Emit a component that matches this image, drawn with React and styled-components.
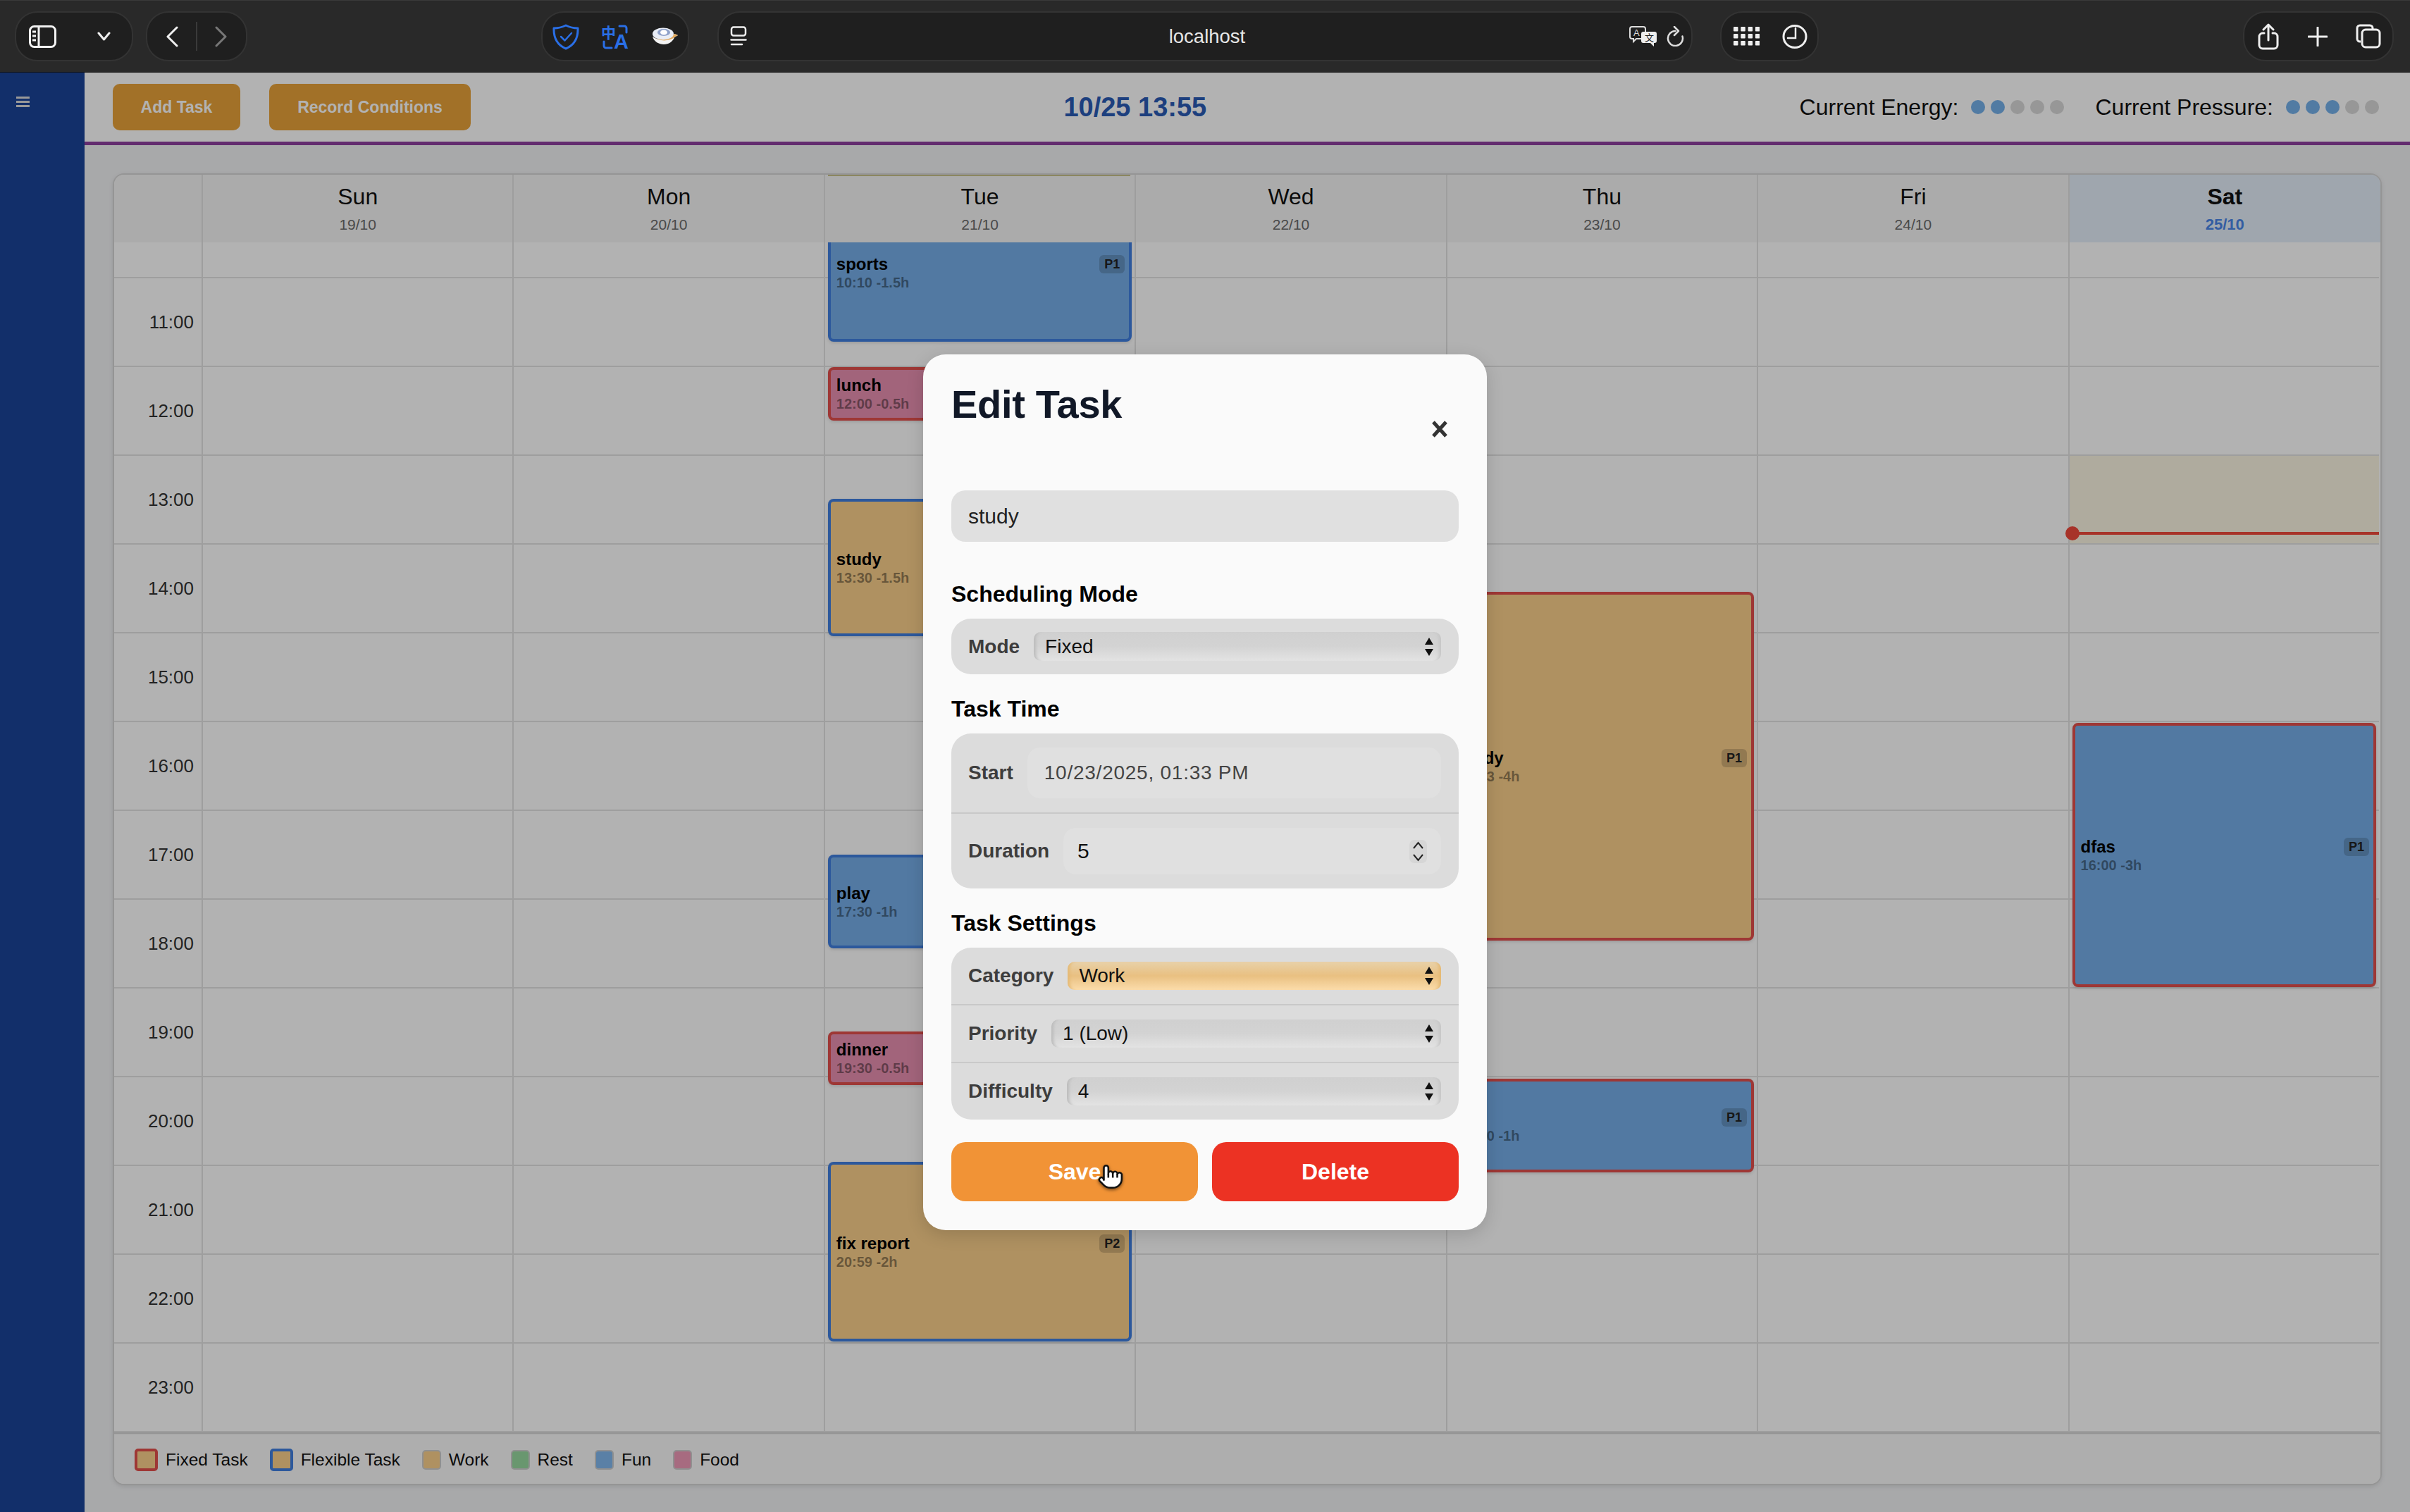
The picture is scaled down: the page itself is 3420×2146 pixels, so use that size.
import styled, { createGlobalStyle } from "styled-components"

const GlobalStyle = createGlobalStyle`
  html, body { margin: 0; padding: 0; height: 100%; }
  body { font-family: "Liberation Sans", Arial, sans-serif; background: #282828; }
  * { box-sizing: border-box; }
`

// ---------- browser toolbar ----------
const Window = styled.div`
  width: 100%;
  height: 100vh;
  display: flex;
  flex-direction: column;
  overflow: hidden;
`

const Toolbar = styled.div`
  height: 103px;
  flex: none;
  display: flex;
  align-items: center;
  padding-left: 21px;
  background: #292929;
  border-top: 1px solid #3a3a3a;
  border-bottom: 1px solid #111;
`

const Pill = styled.div`
  width: ${(p) => p.$w}px;
  height: 71px;
  margin-left: ${(p) => p.$gap || 0}px;
  flex: none;
  display: flex;
  align-items: center;
  justify-content: space-between;
  padding: ${(p) => p.$pad || "0 18px"};
  background: #1f1f1f;
  border: 2px solid #333;
  border-radius: 32px;
`

const UrlPill = styled(Pill)`
  display: grid;
  grid-template-columns: 1fr auto 1fr;
`

const UrlText = styled.span`
  color: #e6e6e6;
  font-size: 27.5px;
`

const UrlRight = styled.div`
  display: flex;
  justify-content: flex-end;
  align-items: center;
  gap: 13px;
`

const PillDivider = styled.span`
  width: 2px;
  height: 41px;
  background: #3a3a3a;
`

// ---------- app shell ----------
const AppBody = styled.div`
  flex: 1;
  min-height: 0;
  display: flex;
  position: relative;
`

const Sidebar = styled.aside`
  width: 120px;
  flex: none;
  background: #1b4499;
  padding: 34px 0 0 23px;
`

const Main = styled.main`
  flex: 1;
  min-width: 0;
  display: flex;
  flex-direction: column;
  background: #f1f2f4;
`

const Header = styled.header`
  height: 103px;
  flex: none;
  display: flex;
  align-items: center;
  justify-content: space-between;
  padding: 0 44px 0 40px;
  background: #fff;
  border-bottom: 5px solid #8e3f9f;
`

const HeaderButtons = styled.div`
  display: flex;
  gap: 41px;
`

const AddButton = styled.button`
  width: ${(p) => p.$w}px;
  height: 66px;
  padding: 0;
  border: none;
  border-radius: 10px;
  background: #e8a23a;
  color: #fff;
  font-family: inherit;
  font-size: 23px;
  font-weight: 700;
`

const HeaderTitle = styled.div`
  color: #2a5bb5;
  font-size: 38px;
  font-weight: 700;
`

const Meters = styled.div`
  display: flex;
  align-items: center;
  gap: 44px;
`

const Meter = styled.div`
  display: flex;
  align-items: center;
  gap: 18px;
  font-size: 32px;
  color: #111;
`

const Dots = styled.div`
  display: flex;
  gap: 8px;
`

const Dot = styled.span`
  width: 20px;
  height: 20px;
  border-radius: 50%;
  background: ${(p) => (p.$on ? "#75b0ea" : "#d8d8d8")};
`

// ---------- calendar ----------
const Card = styled.section`
  flex: 1;
  min-height: 0;
  margin: 40px 40px 38px;
  display: flex;
  flex-direction: column;
  background: #fff;
  border: 2px solid #d6d6d6;
  border-radius: 16px;
  box-shadow: 0 2px 6px rgba(0, 0, 0, 0.1);
  overflow: hidden;
`

const GridRow = styled.div`
  flex: none;
  display: grid;
  grid-template-columns: 126px repeat(7, 1fr);
  overflow: hidden;
`

const HeadCell = styled.div`
  height: 96px;
  padding-top: 11px;
  display: flex;
  flex-direction: column;
  align-items: center;
  background: ${(p) => (p.$today ? "#e4eefa" : "#f5f5f5")};
  border-right: ${(p) => (p.$last ? "0" : "2px solid #e2e2e2")};
  position: relative;
`

const DayName = styled.div`
  font-size: 32px;
  line-height: 40px;
  font-weight: ${(p) => (p.$today ? 700 : 400)};
  color: #111;
`

const DayDate = styled.div`
  margin-top: 8px;
  font-size: ${(p) => (p.$today ? 22 : 21)}px;
  line-height: 24px;
  font-weight: ${(p) => (p.$today ? 700 : 400)};
  color: ${(p) => (p.$today ? "#4a86e8" : "#6b6b6b")};
`

const PeekLine = styled.span`
  position: absolute;
  top: 0;
  left: 4px;
  right: 6px;
  height: 2px;
  background: #c7c08a;
`

const TimeCol = styled.div`
  border-right: 2px solid #e2e2e2;
`

const TimeCell = styled.div`
  height: ${(p) => p.$h}px;
  padding-right: 11px;
  display: flex;
  align-items: center;
  justify-content: flex-end;
  font-size: 26px;
  color: #333;
  border-bottom: 2px solid #e2e2e2;
`

const DayCol = styled.div`
  position: relative;
  border-right: 2px solid ${(p) => (p.$last ? "transparent" : "#e2e2e2")};
`

const HourCell = styled.div`
  height: ${(p) => p.$h}px;
  background: ${(p) => (p.$now ? "#fbf5e2" : "transparent")};
  border-bottom: 2px solid #e2e2e2;
`

const Event = styled.div`
  position: absolute;
  top: ${(p) => p.$top}px;
  left: 4px;
  right: 4px;
  height: ${(p) => p.$h}px;
  padding: 0 6px 0 8px;
  display: flex;
  flex-direction: column;
  justify-content: center;
  background: ${(p) => p.$bg};
  border: 4px solid ${(p) => (p.$fixed ? "#e24f4c" : "#3f7fe0")};
  border-radius: 8px;
  box-shadow: 0 2px 4px rgba(0, 0, 0, 0.12);
`

const EventTop = styled.div`
  display: flex;
  align-items: center;
  justify-content: space-between;
`

const EventName = styled.span`
  font-size: 24px;
  line-height: 28px;
  font-weight: 700;
  color: #000;
`

const EventTime = styled.span`
  font-size: 20px;
  line-height: 24px;
  font-weight: 700;
  color: rgba(0, 0, 0, 0.42);
`

const Badge = styled.span`
  padding: 2px 7px;
  border-radius: 6px;
  background: rgba(0, 0, 0, 0.16);
  font-size: 18px;
  line-height: 22px;
  font-weight: 700;
  color: #222;
`

const NowLine = styled.div`
  position: absolute;
  top: 411px;
  left: 0;
  right: 0;
  height: 4px;
  background: #ef4a3c;
`

const NowDot = styled.span`
  position: absolute;
  left: -6px;
  top: -8px;
  width: 20px;
  height: 20px;
  border-radius: 50%;
  background: #ef4a3c;
`

const Legend = styled.div`
  flex: 1;
  display: flex;
  align-items: center;
  gap: 31px;
  padding: 2px 0 0 29px;
  border-top: 2px solid #d4d4d4;
  background: #fafafa;
  box-shadow: inset 0 1px 2px rgba(0, 0, 0, 0.05);
`

const LegendItem = styled.div`
  display: flex;
  align-items: center;
  gap: 11px;
  font-size: 24.5px;
  color: #111;
`

const Swatch = styled.span`
  width: ${(p) => (p.$border ? 33 : 27)}px;
  height: ${(p) => (p.$border ? 32 : 28)}px;
  background: ${(p) => p.$bg};
  border: ${(p) => (p.$border ? `4px solid ${p.$border}` : "2px solid #cfcfcf")};
  border-radius: 5px;
`

// ---------- modal ----------
const Backdrop = styled.div`
  position: absolute;
  inset: 0;
  display: flex;
  align-items: center;
  justify-content: center;
  background: rgba(0, 0, 0, 0.3);
`

const Modal = styled.div`
  width: 800px;
  height: 1243px;
  padding: 40px;
  background: #fafafa;
  border-radius: 32px;
  box-shadow: 0 6px 24px rgba(0, 0, 0, 0.15);
`

const ModalHead = styled.div`
  height: 113px;
  margin-bottom: 40px;
  display: flex;
  align-items: flex-start;
  justify-content: space-between;
`

const ModalTitle = styled.h2`
  margin: 1px 0 0;
  font-size: 56px;
  line-height: 60px;
  font-weight: 700;
  letter-spacing: -0.3px;
  color: #111827;
`

const CloseIcon = styled.svg`
  margin: 54px 15px 0 0;
`

const NameInput = styled.div`
  height: 73px;
  padding: 0 24px;
  display: flex;
  align-items: center;
  background: #e0e0e0;
  border-radius: 20px;
  font-size: 30px;
  color: #222;
`

const SectionTitle = styled.h3`
  margin: ${(p) => p.$top || 29}px 0 15px;
  font-size: 32px;
  line-height: 40px;
  font-weight: 700;
  color: #000;
`

const Group = styled.div`
  background: #dcdcdc;
  border-radius: 28px;
  overflow: hidden;
`

const Row = styled.div`
  display: flex;
  align-items: center;
  gap: 20px;
  padding: ${(p) => p.$pad || 20}px 25px ${(p) => p.$pad || 20}px 24px;
  border-bottom: ${(p) => (p.$line ? "2px solid #c9c9c9" : "0")};
`

const RowLabel = styled.span`
  font-size: 28px;
  font-weight: 700;
  color: #3d3d3d;
`

const SelectBox = styled.div`
  flex: 1;
  height: ${(p) => p.$h || 40}px;
  padding: 0 10px 0 16px;
  display: flex;
  align-items: center;
  justify-content: space-between;
  border-radius: 10px;
  font-size: 28px;
  color: #111;
  background: ${(p) =>
    p.$tint
      ? "linear-gradient(180deg, #e8d1a9 0%, #e9c081 50%, #fbdcaa 100%)"
      : "linear-gradient(180deg, #d0d0d0 0%, #d3d3d3 50%, #e3e3e3 100%)"};
  box-shadow: inset 7px 0 4px -4px ${(p) => (p.$tint ? "#e4b873" : "#bbb")},
    inset -7px 0 4px -4px ${(p) => (p.$tint ? "#e4b873" : "#c6c6c6")};
`

const FieldBox = styled.div`
  flex: 1;
  height: ${(p) => p.$h}px;
  padding: ${(p) => p.$pad};
  display: flex;
  align-items: center;
  justify-content: space-between;
  background: #e0e0e0;
  border-radius: 18px;
  font-size: ${(p) => p.$size || 28}px;
  letter-spacing: ${(p) => p.$track || 0}px;
  color: ${(p) => p.$color || "#111"};
`

const Spinner = styled.div`
  width: 25px;
  height: 33px;
  display: flex;
  align-items: center;
  justify-content: center;
  background: #d6d6d6;
  border-radius: 7px;
`

const Actions = styled.div`
  margin-top: 32px;
  display: grid;
  grid-template-columns: 1fr 1fr;
  gap: 20px;
`

const ActionButton = styled.button`
  height: 84px;
  border: none;
  border-radius: 20px;
  background: ${(p) => p.$bg};
  color: #fff;
  font-family: inherit;
  font-size: 32px;
  font-weight: 700;
  position: relative;
`

const Cursor = styled.svg`
  position: absolute;
  left: 207px;
  top: 29px;
  filter: drop-shadow(0 2px 2px rgba(0, 0, 0, 0.5));
`

// ---------- icons ----------
const SidebarIcon = () => (
  <svg width="39" height="32" viewBox="0 0 39 32" fill="none" stroke="#f2f2f2" strokeWidth="3">
    <rect x="1.5" y="1.5" width="36" height="29" rx="6" />
    <path d="M14 2v28" />
    <path d="M5 9h5M5 15h5M5 21h5" strokeWidth="3" />
  </svg>
)

const ChevronDown = () => (
  <svg width="19" height="13" viewBox="0 0 19 13" fill="none" stroke="#eee" strokeWidth="3" strokeLinecap="round" strokeLinejoin="round">
    <path d="M2 2l7.5 9L17 2" />
  </svg>
)

const ChevronSide = ({ dir, color }) => (
  <svg width="19" height="30" viewBox="0 0 19 30" fill="none" stroke={color} strokeWidth="3" strokeLinecap="round" strokeLinejoin="round">
    <path d={dir === "left" ? "M16 2L3 15l13 13" : "M3 2l13 13L3 28"} />
  </svg>
)

const ShieldIcon = () => (
  <svg width="38" height="38" viewBox="0 0 38 38" fill="none" stroke="#2a6fe6" strokeWidth="3" strokeLinecap="round" strokeLinejoin="round">
    <path d="M19 3c5 2.5 11 4 17 4c.5 14-5 24-17 29C7 31 1.500 21 2 7c6 0 12-1.500 17-4z" />
    <path d="M12 19l5.500 5.500L27 14" strokeWidth="2.500" />
  </svg>
)

const TranslateIcon = () => (
  <svg width="40" height="48" viewBox="0 0 40 48" fill="#2a6fe6" overflow="visible">
    <text x="-1" y="26" fontSize="21" fontWeight="700" fontFamily="Noto Sans CJK SC">中</text>
    <text x="17" y="41" fontSize="29" fontWeight="700" fontFamily="Liberation Sans">A</text>
    <path d="M25 9h7a3 3 0 0 1 3 3v6M3 31v6a3 3 0 0 0 3 3h8" fill="none" stroke="#2a6fe6" strokeWidth="3" strokeLinecap="round" />
  </svg>
)

const CupIcon = () => (
  <svg width="37" height="25" viewBox="0 0 37 25">
    <path d="M1 13c2 7 9 11 16 11s13-4 15-10l5-3-5-2C24 19 9 19 1 13z" fill="#f3f3f3" />
    <path d="M1 13c8 6 23 6 31-4l5 2-5 3c-8 6-22 6-31-1z" fill="#e3a95b" />
    <ellipse cx="16" cy="9" rx="15" ry="8.500" fill="#e9edf5" />
    <ellipse cx="17" cy="7" rx="9" ry="5" fill="#8fa1c9" />
    <ellipse cx="17" cy="7" rx="5" ry="3.500" fill="#fff" />
  </svg>
)

const ReaderIcon = () => (
  <svg width="24" height="29" viewBox="0 0 24 29" fill="none" stroke="#eee" strokeWidth="2.500" strokeLinecap="round">
    <rect x="2" y="1.500" width="20" height="12" rx="3" />
    <path d="M1.500 19.500h21M2 26h15" />
  </svg>
)

const BubblesIcon = () => (
  <svg width="40" height="30" viewBox="0 0 40 30">
    <path d="M4 1h16a3 3 0 0 1 3 3v11a3 3 0 0 1-3 3H10l-4 4v-4H4a3 3 0 0 1-3-3V4a3 3 0 0 1 3-3z" fill="none" stroke="#ddd" strokeWidth="2" />
    <text x="6" y="14" fontSize="13" fill="#ddd" fontFamily="Liberation Sans">A</text>
    <path d="M20 8h16a3 3 0 0 1 3 3v10a3 3 0 0 1-3 3h-1v5l-5-5H20a3 3 0 0 1-3-3V11a3 3 0 0 1 3-3z" fill="#eee" />
    <text x="22" y="21" fontSize="13" fill="#222" fontFamily="Noto Sans CJK SC">文</text>
  </svg>
)

const ReloadIcon = () => (
  <svg width="25" height="29" viewBox="0 0 25 29" fill="none" stroke="#ddd" strokeWidth="2.500" strokeLinecap="round" strokeLinejoin="round">
    <path d="M12.500 7A10.500 10.500 0 1 0 22.500 14.500" />
    <path d="M11 1l6 6l-6 6" />
  </svg>
)

const GridIcon = () => (
  <svg width="37" height="27" viewBox="0 0 37 27" fill="#eee">
    {[0, 1, 2].flatMap((r) =>
      [0, 1, 2, 3].map((c) => <rect key={`${r}-${c}`} x={c * 10.3} y={r * 10} width="6.500" height="6.500" rx="1" />)
    )}
  </svg>
)

const ClockIcon = () => (
  <svg width="36" height="34" viewBox="0 0 36 34" fill="none" stroke="#eee" strokeWidth="3" strokeLinecap="round">
    <ellipse cx="18" cy="17" rx="16" ry="15.500" />
    <path d="M19 5v14H8" strokeWidth="2.500" />
  </svg>
)

const ShareIcon = () => (
  <svg width="30" height="38" viewBox="0 0 30 38" fill="none" stroke="#eee" strokeWidth="3" strokeLinecap="round" strokeLinejoin="round">
    <path d="M9 14H7a5 5 0 0 0-5 5v12a5 5 0 0 0 5 5h16a5 5 0 0 0 5-5V19a5 5 0 0 0-5-5h-2" />
    <path d="M15 24V2M8 9l7-7l7 7" />
  </svg>
)

const PlusIcon = () => (
  <svg width="28" height="28" viewBox="0 0 28 28" stroke="#eee" strokeWidth="3" strokeLinecap="round">
    <path d="M14 1v26M1 14h26" />
  </svg>
)

const TabsIcon = () => (
  <svg width="36" height="35" viewBox="0 0 36 35" fill="none" stroke="#eee" strokeWidth="3">
    <path d="M7 25H6a4 4 0 0 1-4-4V6a4 4 0 0 1 4-4h14a4 4 0 0 1 4 4v1" />
    <rect x="9" y="8" width="25" height="25" rx="5" />
  </svg>
)

const MenuIcon = () => (
  <svg width="19" height="16" viewBox="0 0 19 16" fill="#dcdcdc">
    <rect y="0" width="19" height="3" />
    <rect y="6" width="19" height="3" />
    <rect y="12" width="19" height="3" />
  </svg>
)

const UpDownArrows = () => (
  <svg width="14" height="26" viewBox="0 0 14 26" fill="#111">
    <path d="M7 0l6 10H1zM7 26l-6-10h12z" />
  </svg>
)

const SpinArrows = () => (
  <svg width="17" height="29" viewBox="0 0 17 29" fill="none" stroke="#222" strokeWidth="2">
    <path d="M2 10l6.500-8L15 10M2 19l6.500 8L15 19" />
  </svg>
)

// ---------- data ----------
const DAYS = [
  ["Sun", "19/10"], ["Mon", "20/10"], ["Tue", "21/10"], ["Wed", "22/10"],
  ["Thu", "23/10"], ["Fri", "24/10"], ["Sat", "25/10"],
]
const HOURS = ["11:00", "12:00", "13:00", "14:00", "15:00", "16:00", "17:00", "18:00", "19:00", "20:00", "21:00", "22:00", "23:00"]

const BLUE = "#76aee8"
const TAN = "#fbd08c"
const PINK = "#e890b0"

const EVENTS = {
  2: [
    { name: "sports", time: "10:10 -1.5h", top: -55, h: 196, bg: BLUE, badge: "P1" },
    { name: "lunch", time: "12:00 -0.5h", top: 177, h: 76, bg: PINK, fixed: true },
    { name: "study", time: "13:30 -1.5h", top: 364, h: 195, bg: TAN },
    { name: "play", time: "17:30 -1h", top: 869, h: 133, bg: BLUE },
    { name: "dinner", time: "19:30 -0.5h", top: 1120, h: 76, bg: PINK, fixed: true },
    { name: "fix report", time: "20:59 -2h", top: 1305, h: 255, bg: TAN, badge: "P2" },
  ],
  4: [
    { name: "study", time: "14:33 -4h", top: 496, h: 495, bg: TAN, fixed: true, badge: "P1" },
    { name: "tv", time: "20:00 -1h", top: 1187, h: 133, bg: BLUE, fixed: true, badge: "P1" },
  ],
  6: [{ name: "dfas", time: "16:00 -3h", top: 682, h: 375, bg: BLUE, fixed: true, badge: "P1" }],
}

const LEGEND = [
  { label: "Fixed Task", bg: TAN, border: "#e24f4c" },
  { label: "Flexible Task", bg: TAN, border: "#3f7fe0" },
  { label: "Work", bg: TAN },
  { label: "Rest", bg: "#97d9a0" },
  { label: "Fun", bg: "#82b8ee" },
  { label: "Food", bg: "#f09ab8" },
]

const meter = (level) => [1, 2, 3, 4, 5].map((n) => <Dot key={n} $on={n <= level} />)

export default function App() {
  return (
    <Window>
      <GlobalStyle />
      <Toolbar>
        <Pill $w={168} $pad="0 30px 0 18px">
          <SidebarIcon />
          <ChevronDown />
        </Pill>
        <Pill $w={144} $gap={18} $pad="0 26px">
          <ChevronSide dir="left" color="#eee" />
          <PillDivider />
          <ChevronSide dir="right" color="#777" />
        </Pill>
        <Pill $w={210} $gap={417} $pad="0 14px">
          <ShieldIcon />
          <TranslateIcon />
          <CupIcon />
        </Pill>
        <UrlPill $w={1384} $gap={40} $pad="0 10px 0 16px">
          <ReaderIcon />
          <UrlText>localhost</UrlText>
          <UrlRight>
            <BubblesIcon />
            <ReloadIcon />
          </UrlRight>
        </UrlPill>
        <Pill $w={140} $gap={39} $pad="0 14px 0 17px">
          <GridIcon />
          <ClockIcon />
        </Pill>
        <Pill $w={214} $gap={602} $pad="0 16px 0 19px">
          <ShareIcon />
          <PlusIcon />
          <TabsIcon />
        </Pill>
      </Toolbar>

      <AppBody>
        <Sidebar>
          <MenuIcon />
        </Sidebar>
        <Main>
          <Header>
            <HeaderButtons>
              <AddButton $w={181}>Add Task</AddButton>
              <AddButton $w={286}>Record Conditions</AddButton>
            </HeaderButtons>
            <HeaderTitle>10/25 13:55</HeaderTitle>
            <Meters>
              <Meter>
                Current Energy:
                <Dots>{meter(2)}</Dots>
              </Meter>
              <Meter>
                Current Pressure:
                <Dots>{meter(3)}</Dots>
              </Meter>
            </Meters>
          </Header>

          <Card>
            <GridRow>
              <HeadCell />
              {DAYS.map(([name, date], i) => (
                <HeadCell key={name} $today={i === 6} $last={i === 6}>
                  {i === 2 && <PeekLine />}
                  <DayName $today={i === 6}>{name}</DayName>
                  <DayDate $today={i === 6}>{date}</DayDate>
                </HeadCell>
              ))}
            </GridRow>
            <GridRow>
              <TimeCol>
                <TimeCell $h={51} />
                {HOURS.map((h) => (
                  <TimeCell key={h} $h={126}>{h}</TimeCell>
                ))}
              </TimeCol>
              {DAYS.map(([name], i) => (
                <DayCol key={name} $last={i === 6}>
                  <HourCell $h={51} />
                  {HOURS.map((h) => (
                    <HourCell key={h} $h={126} $now={i === 6 && h === "13:00"} />
                  ))}
                  {(EVENTS[i] || []).map((ev) => (
                    <Event key={ev.name + ev.top} $top={ev.top} $h={ev.h} $bg={ev.bg} $fixed={ev.fixed}>
                      <EventTop>
                        <EventName>{ev.name}</EventName>
                        {ev.badge && <Badge>{ev.badge}</Badge>}
                      </EventTop>
                      <EventTime>{ev.time}</EventTime>
                    </Event>
                  ))}
                  {i === 6 && (
                    <NowLine>
                      <NowDot />
                    </NowLine>
                  )}
                </DayCol>
              ))}
            </GridRow>
            <Legend>
              {LEGEND.map((l) => (
                <LegendItem key={l.label}>
                  <Swatch $bg={l.bg} $border={l.border} />
                  {l.label}
                </LegendItem>
              ))}
            </Legend>
          </Card>
        </Main>

        <Backdrop>
          <Modal>
            <ModalHead>
              <ModalTitle>Edit Task</ModalTitle>
              <CloseIcon width="24" height="24" viewBox="0 0 24 24" stroke="#333" strokeWidth="5">
                <path d="M3 2l18 20M21 2L3 22" />
              </CloseIcon>
            </ModalHead>
            <NameInput>study</NameInput>

            <SectionTitle $top={54}>Scheduling Mode</SectionTitle>
            <Group>
              <Row $pad={19}>
                <RowLabel>Mode</RowLabel>
                <SelectBox $h={41}>Fixed<UpDownArrows /></SelectBox>
              </Row>
            </Group>

            <SectionTitle>Task Time</SectionTitle>
            <Group>
              <Row $line>
                <RowLabel>Start</RowLabel>
                <FieldBox $h={72} $pad="0 24px" $color="#444" $track={0.75}>10/23/2025, 01:33 PM</FieldBox>
              </Row>
              <Row>
                <RowLabel>Duration</RowLabel>
                <FieldBox $h={66} $pad="0 20px" $size={30}>
                  5
                  <Spinner><SpinArrows /></Spinner>
                </FieldBox>
              </Row>
            </Group>

            <SectionTitle>Task Settings</SectionTitle>
            <Group>
              <Row $line>
                <RowLabel>Category</RowLabel>
                <SelectBox $tint>Work<UpDownArrows /></SelectBox>
              </Row>
              <Row $line>
                <RowLabel>Priority</RowLabel>
                <SelectBox>1 (Low)<UpDownArrows /></SelectBox>
              </Row>
              <Row>
                <RowLabel>Difficulty</RowLabel>
                <SelectBox>4<UpDownArrows /></SelectBox>
              </Row>
            </Group>

            <Actions>
              <ActionButton $bg="#f19336">
                Save
                <Cursor width="38" height="40" viewBox="0 0 24 24" fill="#fff" stroke="#111" strokeWidth="1.6" strokeLinejoin="round">
                  <path d="M8 2a2 2 0 0 1 2 2v5.500a2 2 0 0 1 4-.5a2 2 0 0 1 4 1a2 2 0 0 1 4 1v3a8 8 0 0 1-8 8h-2c-2.800 0-4.500-.86-6-2.340l-3.600-3.600a2 2 0 0 1 2.830-2.820L6 15V4a2 2 0 0 1 2-2z" />
                  <path d="M10 9.500V13M14 9v4M18 10v3" fill="none" />
                </Cursor>
              </ActionButton>
              <ActionButton $bg="#ec3223">Delete</ActionButton>
            </Actions>
          </Modal>
        </Backdrop>
      </AppBody>
    </Window>
  )
}
